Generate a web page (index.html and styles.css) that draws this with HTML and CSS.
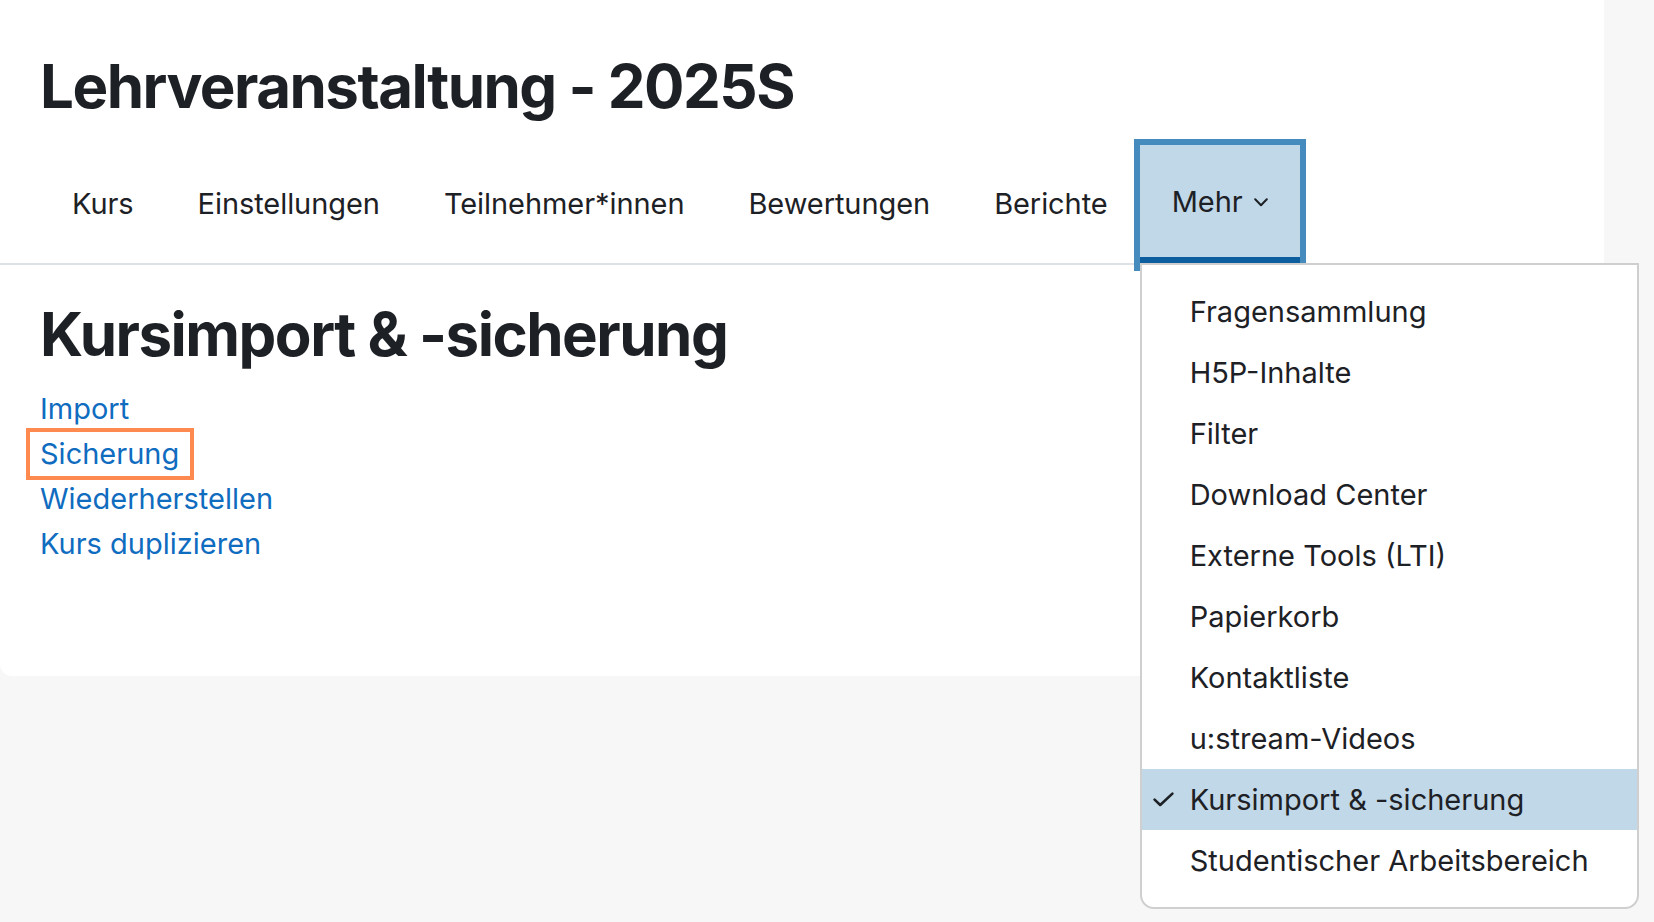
FILE: index.html
```html
<!DOCTYPE html>
<html lang="de">
<head>
<meta charset="utf-8">
<title>Kursimport &amp; -sicherung</title>
<link rel="stylesheet" href="styles.css">
</head>
<body>
<div class="page">
  <main class="card">
    <header class="course-header">
      <h1 class="course-title">Lehrveranstaltung - 2025S</h1>
    </header>
    <nav class="secondary-nav">
      <ul class="nav-list">
        <li class="nav-item"><a class="nav-link" href="#">Kurs</a></li>
        <li class="nav-item"><a class="nav-link" href="#">Einstellungen</a></li>
        <li class="nav-item"><a class="nav-link" href="#">Teilnehmer*innen</a></li>
        <li class="nav-item"><a class="nav-link" href="#">Bewertungen</a></li>
        <li class="nav-item"><a class="nav-link" href="#">Berichte</a></li>
        <li class="nav-item nav-more">
          <a class="nav-link nav-link-active" href="#">Mehr<svg class="chevron" viewBox="0 0 14 9" width="14" height="9" aria-hidden="true"><polyline points="1.2,1.2 7,7.2 12.8,1.2" fill="none" stroke="#1d2125" stroke-width="2" stroke-linecap="round" stroke-linejoin="round"/></svg></a>
          <ul class="dropdown">
            <li><a class="dropdown-item" href="#">Fragensammlung</a></li>
            <li><a class="dropdown-item" href="#">H5P-Inhalte</a></li>
            <li><a class="dropdown-item" href="#">Filter</a></li>
            <li><a class="dropdown-item" href="#">Download Center</a></li>
            <li><a class="dropdown-item" href="#">Externe Tools (LTI)</a></li>
            <li><a class="dropdown-item" href="#">Papierkorb</a></li>
            <li><a class="dropdown-item" href="#">Kontaktliste</a></li>
            <li><a class="dropdown-item" href="#">u:stream-Videos</a></li>
            <li><a class="dropdown-item dropdown-item-active" href="#"><svg class="check" viewBox="0 0 21 15" width="21" height="15" aria-hidden="true"><polyline points="1.6,7.6 7.2,13 19.4,1.6" fill="none" stroke="#1d2125" stroke-width="2.6" stroke-linecap="round" stroke-linejoin="round"/></svg>Kursimport &amp; -sicherung</a></li>
            <li><a class="dropdown-item" href="#">Studentischer Arbeitsbereich</a></li>
          </ul>
        </li>
      </ul>
    </nav>
    <section class="content">
      <h2 class="page-heading">Kursimport &amp; -sicherung</h2>
      <ul class="link-list">
        <li><a class="content-link" href="#">Import</a></li>
        <li><span class="highlight"><a class="content-link" href="#">Sicherung</a></span></li>
        <li><a class="content-link" href="#">Wiederherstellen</a></li>
        <li><a class="content-link" href="#">Kurs duplizieren</a></li>
      </ul>
    </section>
  </main>
</div>
</body>
</html>
```

FILE: styles.css
```css
* {
  box-sizing: border-box;
}

html, body {
  margin: 0;
  padding: 0;
}

body {
  background: #f7f7f7;
  color: #1d2125;
  font-family: Inter, "Noto Sans", "Liberation Sans", sans-serif;
  font-size: 29px;
  line-height: 45px;
  width: 1654px;
  height: 922px;
  overflow: hidden;
}

a {
  text-decoration: none;
}

ul {
  list-style: none;
  margin: 0;
  padding: 0;
}

.page {
  padding-right: 50px;
}

.card {
  background: #ffffff;
  border-radius: 12px;
  margin-top: -9px;
  padding: 59px 0 110px 0;
}

.course-header {
  padding: 0 40px;
}

.course-title {
  margin: 0;
  font-size: 60px;
  line-height: 72px;
  font-weight: 700;
  letter-spacing: -1.5px;
}

.secondary-nav {
  margin-top: 23px;
}

.nav-list {
  display: flex;
  padding-left: 40px;
  height: 120px;
  border-bottom: 2px solid #dee2e6;
}

.nav-item {
  position: relative;
  height: 120px;
  margin-bottom: -2px;
}

.nav-link {
  display: flex;
  align-items: center;
  height: 120px;
  padding: 0 32px 3px 32px;
  color: #1d2125;
  white-space: nowrap;
  letter-spacing: -0.07px;
}

.nav-link-active {
  background: #c1d8e8;
  padding-bottom: 0;
  border-bottom: 8px solid #0d5e9f;
  outline: 6px solid #458bbd;
  position: relative;
  z-index: 1;
}

.chevron {
  margin-left: 11px;
  margin-top: 3px;
}

.dropdown {
  position: absolute;
  z-index: 2;
  left: 0;
  top: calc(100% - 2px);
  width: 499px;
  background: #ffffff;
  border: 2px solid #cfcfcf;
  border-radius: 0 0 14px 14px;
  padding: 16px 0;
}

.dropdown-item {
  position: relative;
  display: block;
  padding: 8px 48px;
  color: #1d2125;
  white-space: nowrap;
}

.dropdown-item-active {
  background: #c1d8e8;
}

.check {
  position: absolute;
  left: 11px;
  top: 23px;
}

.content {
  padding: 33px 40px 0 40px;
}

.page-heading {
  margin: 0 0 16px 0;
  font-size: 60px;
  line-height: 72px;
  font-weight: 700;
  letter-spacing: -1.5px;
}

.content-link {
  color: #0f6cbf;
}

.highlight {
  position: relative;
  display: inline-block;
}

.highlight::after {
  content: "";
  position: absolute;
  left: -14px;
  right: -15px;
  top: -3px;
  bottom: -4px;
  border: 4.5px solid #ff8a50;
  pointer-events: none;
}
```
